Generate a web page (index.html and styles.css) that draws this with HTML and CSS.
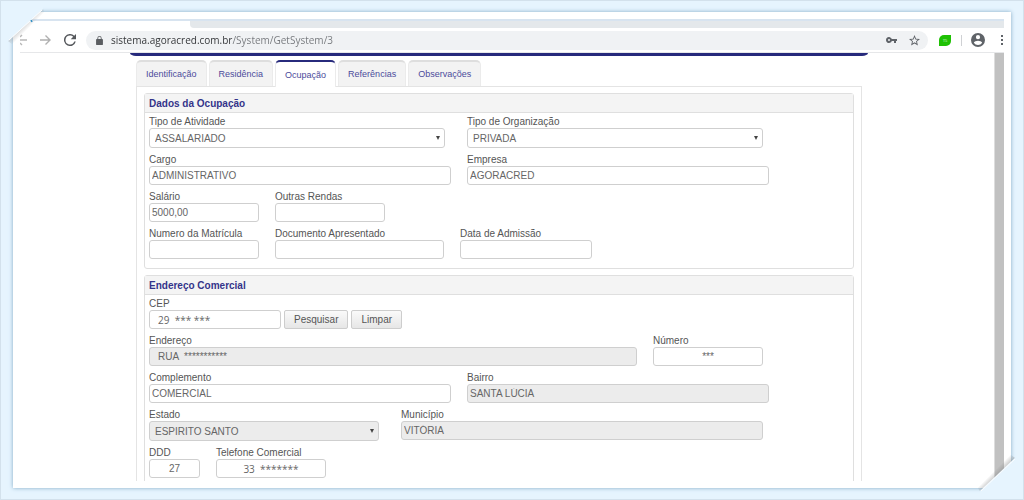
FILE: index.html
```html
<!DOCTYPE html>
<html lang="pt-br">
<head>
    <meta charset="UTF-8">
    <meta name="viewport" content="width=device-width, initial-scale=1.0">
    <title>Sistema Agoracred</title>
    <link rel="stylesheet" href="styles.css">
</head>
<body>
    <div class="frame">
        <div class="browser">
            <div class="tab-strip"><div class="open-tab"></div><div class="strip-rest"></div></div>
            <header class="toolbar">
                <button type="button" class="icon-btn back" aria-label="Voltar">
                    <svg width="7" height="12" viewBox="0 0 7 12" fill="none" stroke="#b8b8b8" stroke-width="1.4"><path d="M0 6h7M0 3l2-2M0 9l2 2"/></svg>
                </button>
                <button type="button" class="icon-btn forward" aria-label="Avançar">
                    <svg width="11" height="12" viewBox="0 0 11 12" fill="none" stroke="#b0b0b0" stroke-width="1.4"><path d="M0 6h10M5.5 1.500L10 6l-4.500 4.500"/></svg>
                </button>
                <button type="button" class="icon-btn reload" aria-label="Recarregar">
                    <svg width="12" height="12" viewBox="4 4 16 16" fill="#55585c"><path d="M17.650 6.350A8 8 0 1 0 19.730 14h-2.080A6 6 0 1 1 12 6c1.660 0 3.140.69 4.220 1.780L13 11h7V4z"/></svg>
                </button>
                <div class="address">
                    <svg width="7" height="9" viewBox="4 1 16 21" fill="#5a5d61"><path d="M18 8h-1V6A5 5 0 0 0 7 6v2H6a2 2 0 0 0-2 2v10a2 2 0 0 0 2 2h12a2 2 0 0 0 2-2V10a2 2 0 0 0-2-2zM9 8V6a3 3 0 0 1 6 0v2z"/></svg>
                    <input type="text" class="url" aria-label="Endereço do site" value="sistema.agoracred.com.br/System/GetSystem/3">
                    <svg width="11" height="6" viewBox="1 6 22 12" fill="#5f6368"><path d="M12.650 10A6 6 0 1 0 12.650 14H17v4h4v-4h2v-4zM7 14a2 2 0 1 1 0-4 2 2 0 0 1 0 4z"/></svg>
                    <svg width="11" height="11" viewBox="2 2 20 20" fill="#5f6368"><path d="M22 9.240l-7.190-.62L12 2 9.190 8.630 2 9.240l5.460 4.730L5.820 21 12 17.270 18.180 21l-1.630-7.030zM12 15.400l-3.760 2.270 1-4.280-3.320-2.880 4.380-.38L12 6.100l1.710 4.040 4.380.38-3.320 2.880 1 4.280z"/></svg>
                </div>
                <div class="extension">T5</div>
                <div class="divider"></div>
                <svg class="avatar" width="14" height="14" viewBox="2 2 20 20" fill="#5f6368"><path d="M12 2a10 10 0 1 0 0 20 10 10 0 0 0 0-20zm0 3a3 3 0 1 1 0 6 3 3 0 0 1 0-6zm0 14.200A7.200 7.200 0 0 1 6 16c.03-2 4-3.100 6-3.100s5.970 1.100 6 3.100a7.200 7.200 0 0 1-6 3.200z"/></svg>
                <button type="button" class="icon-btn" aria-label="Menu">
                    <svg width="3" height="10" viewBox="0 0 3 10" fill="#5f6368"><path d="M0 0h2v2H0zM0 4h2v2H0zM0 8h2v2H0z"/></svg>
                </button>
            </header>

            <div class="viewport">
                <main class="page">
                    <div class="top-bar"></div>
                    <div class="content">
                        <nav class="tabs" role="tablist">
                            <button type="button" role="tab" class="tab">Identificação</button>
                            <button type="button" role="tab" class="tab">Residência</button>
                            <button type="button" role="tab" class="tab active" aria-selected="true">Ocupação</button>
                            <button type="button" role="tab" class="tab">Referências</button>
                            <button type="button" role="tab" class="tab">Observações</button>
                        </nav>

                        <form class="panel">
                            <section class="box">
                                <h2>Dados da Ocupação</h2>
                                <div class="rows">
                                    <div class="row">
                                        <div class="field">
                                            <label for="atividade">Tipo de Atividade</label>
                                            <div class="select w-large"><select id="atividade"><option>ASSALARIADO</option></select></div>
                                        </div>
                                        <div class="field">
                                            <label for="organizacao">Tipo de Organização</label>
                                            <div class="select w-large"><select id="organizacao"><option>PRIVADA</option></select></div>
                                        </div>
                                    </div>
                                    <div class="row">
                                        <div class="field">
                                            <label for="cargo">Cargo</label>
                                            <input type="text" id="cargo" class="w-text" value="ADMINISTRATIVO">
                                        </div>
                                        <div class="field">
                                            <label for="empresa">Empresa</label>
                                            <input type="text" id="empresa" class="w-text" value="AGORACRED">
                                        </div>
                                    </div>
                                    <div class="row">
                                        <div class="field">
                                            <label for="salario">Salário</label>
                                            <input type="text" id="salario" class="w-small" value="5000,00">
                                        </div>
                                        <div class="field">
                                            <label for="rendas">Outras Rendas</label>
                                            <input type="text" id="rendas" class="w-small">
                                        </div>
                                    </div>
                                    <div class="row">
                                        <div class="field">
                                            <label for="matricula">Numero da Matrícula</label>
                                            <input type="text" id="matricula" class="w-small">
                                        </div>
                                        <div class="field">
                                            <label for="documento">Documento Apresentado</label>
                                            <input type="text" id="documento" class="w-doc">
                                        </div>
                                        <div class="field">
                                            <label for="admissao">Data de Admissão</label>
                                            <input type="text" id="admissao" class="w-date">
                                        </div>
                                    </div>
                                </div>
                            </section>

                            <section class="box">
                                <h2>Endereço Comercial</h2>
                                <div class="rows">
                                    <div class="row with-buttons">
                                        <div class="field">
                                            <label for="cep">CEP</label>
                                            <input type="text" id="cep" class="w-date indent masked" value="29  *** ***">
                                        </div>
                                        <button type="button" class="btn">Pesquisar</button>
                                        <button type="button" class="btn">Limpar</button>
                                    </div>
                                    <div class="row">
                                        <div class="field">
                                            <label for="endereco">Endereço</label>
                                            <input type="text" id="endereco" class="w-street indent" value="RUA  ***********" readonly>
                                        </div>
                                        <div class="field">
                                            <label for="numero">Número</label>
                                            <input type="text" id="numero" class="w-small center" value="***">
                                        </div>
                                    </div>
                                    <div class="row">
                                        <div class="field">
                                            <label for="complemento">Complemento</label>
                                            <input type="text" id="complemento" class="w-text" value="COMERCIAL">
                                        </div>
                                        <div class="field">
                                            <label for="bairro">Bairro</label>
                                            <input type="text" id="bairro" class="w-text" value="SANTA LÚCIA" readonly>
                                        </div>
                                    </div>
                                    <div class="row">
                                        <div class="field">
                                            <label for="estado">Estado</label>
                                            <div class="select w-state"><select id="estado" disabled><option>ESPIRITO SANTO</option></select></div>
                                        </div>
                                        <div class="field">
                                            <label for="municipio">Município</label>
                                            <input type="text" id="municipio" class="w-city" value="VITÓRIA" readonly>
                                        </div>
                                    </div>
                                    <div class="row">
                                        <div class="field">
                                            <label for="ddd">DDD</label>
                                            <input type="text" id="ddd" class="w-ddd center" value="27">
                                        </div>
                                        <div class="field">
                                            <label for="telefone">Telefone Comercial</label>
                                            <input type="text" id="telefone" class="w-small center masked" value="33  *******">
                                        </div>
                                    </div>
                                </div>
                            </section>
                        </form>
                    </div>
                </main>
                <div class="scrollbar"></div>
            </div>
        </div>

        <!-- Cantos dobrados -->
        <svg class="corner corner-top" width="48" height="48" viewBox="0 0 48 48">
            <defs>
                <linearGradient id="fold" gradientUnits="userSpaceOnUse" x1="25" y1="24" x2="29" y2="28">
                    <stop offset="0" stop-color="#999" stop-opacity="0.4"/>
                    <stop offset="1" stop-color="#999" stop-opacity="0"/>
                </linearGradient>
            </defs>
            <path d="M43 9L46 14 13 45 8 41z" fill="url(#fold)"/>
            <path d="M4 4h40L43 9 8 41 4 42z" fill="#e6f4fe"/>
            <path d="M42 10L9 40" stroke="#fbfdff"/>
            <path d="M31 20l1 2" stroke="#2f8fc4" stroke-width="1.500"/>
        </svg>
        <svg class="corner corner-bottom" width="48" height="48" viewBox="0 0 48 48">
            <defs>
                <linearGradient id="fold-end" gradientUnits="userSpaceOnUse" x1="22" y1="23" x2="18" y2="19">
                    <stop offset="0" stop-color="#777" stop-opacity="0.4"/>
                    <stop offset="1" stop-color="#777" stop-opacity="0"/>
                </linearGradient>
            </defs>
            <path d="M4 39L0 34 34 2 39 6z" fill="url(#fold-end)"/>
            <path d="M44 44H4V39L39 6h5z" fill="#e6f4fe"/>
            <path d="M5 39L39 7" stroke="#fbfdff"/>
        </svg>
    </div>
</body>
</html>
```
FILE: styles.css
```css
/* General */
* {
    box-sizing: border-box;
}

body {
    margin: 0;
    font-family: "Liberation Sans", Arial, sans-serif;
    font-size: 10px;
    color: #555;
}

button,
input,
select {
    font-family: inherit;
    font-size: inherit;
    color: inherit;
    margin: 0;
}

/* Marco */
.frame {
    position: relative;
    height: 100vh;
    padding: 11px 12px;
    background: #e6f4fe;
    border: 1px solid #d3e1ec;
}

.browser {
    display: flex;
    flex-direction: column;
    height: 100%;
    padding: 7px;
    background: #fff;
    box-shadow: 0 0 4px #7fa9c4;
}

.corner {
    position: absolute;
}

.corner-top {
    top: -1px;
    left: -1px;
}

.corner-bottom {
    right: -1px;
    bottom: -1px;
}

/* Barra do navegador */
.tab-strip {
    display: flex;
    flex: none;
    height: 9px;
    border-top: 2px solid #d8e4f0;
    background: #fff;
}

.open-tab {
    width: 170px;
}

.strip-rest {
    flex: 1;
    background: #e4e8eb;
    border-radius: 0 0 0 4px;
}

.toolbar {
    display: flex;
    flex: none;
    align-items: center;
    height: 25px;
    border-bottom: 1px solid #e6e7e9;
}

.icon-btn {
    display: flex;
    padding: 0;
    border: none;
    background: none;
}

.back,
.forward {
    margin-right: 13px;
}

.reload {
    margin-right: 10px;
}

.address {
    display: flex;
    flex: 1;
    align-items: center;
    height: 19px;
    padding: 0 8px 0 10px;
    background: #f0f2f4;
    border-radius: 10px;
}

.url {
    flex: 1;
    margin: 0 12px 0 8px;
    padding: 0;
    border: none;
    font-family: "Open Sans", "Noto Sans", sans-serif;
    /* dominio escuro, caminho mais claro */
    background: linear-gradient(to right, #2f3134 121px, #74777b 121px);
    -webkit-background-clip: text;
    background-clip: text;
    color: transparent;
}

.address svg:last-child {
    margin-left: 12px;
}

.extension {
    width: 12px;
    height: 11px;
    margin: 0 10px 0 11px;
    border-radius: 5px 0 5px 0;
    background: #1fc104;
    color: #c9f5c2;
    font-size: 4px;
    line-height: 11px;
    text-align: center;
}

.divider {
    width: 1px;
    height: 11px;
    margin-right: 9px;
    background: #cfd1d4;
}

.avatar {
    margin-right: 16px;
}

/* Pagina */
.viewport {
    display: flex;
    flex: 1;
    min-height: 0;
}

.page {
    flex: 1;
    padding: 0 126px 0 110px;
    overflow: hidden;
}

.scrollbar {
    width: 10px;
    background: #c1c1c1;
    border-left: 1px solid #ddd;
}

.top-bar {
    height: 3px;
    background: #272a7c;
    border-radius: 0 0 6px 6px / 0 0 3px 3px;
}

.content {
    padding: 4px 6px 0;
}

/* Abas */
.tabs {
    display: flex;
    gap: 2px;
}

.tab {
    height: 26px;
    padding: 0 9px;
    border: 1px solid #ebebeb;
    border-top: 2px solid #dedede;
    border-bottom: none;
    border-radius: 5px 5px 0 0;
    background: #f3f3f3;
    color: #4b4b9b;
    font-size: 9px;
}

.tab.active {
    height: 27px;
    margin-bottom: -1px;
    border-top-color: #272a7c;
    background: #fff;
    z-index: 1;
}

.panel {
    padding: 6px 7px;
    border: 1px solid #e4e4e4;
    border-bottom: none;
}

/* Caixas do formulario */
.box {
    margin-bottom: 6px;
    border: 1px solid #dfdfdf;
    border-radius: 3px;
}

.box h2 {
    height: 19px;
    margin: 0;
    padding: 0 4px;
    border-bottom: 1px solid #dfdfdf;
    background: #f4f4f4;
    color: #34348a;
    font-size: 10px;
    line-height: 19px;
}

.rows {
    display: flex;
    flex-direction: column;
    gap: 6px;
    padding: 3px 4px 9px;
}

.row {
    display: flex;
    gap: 16px;
}

.with-buttons {
    align-items: flex-end;
    gap: 3px;
}

.field label {
    display: block;
    height: 12px;
    line-height: 12px;
}

.field input,
.field select {
    display: block;
    height: 19px;
    padding: 0 2px;
    border: 1px solid #cfcfcf;
    border-radius: 3px;
    background: #fff;
    color: #666;
    line-height: 17px;
}

.field select {
    width: 100%;
    height: 20px;
    padding: 0 5px;
    appearance: none;
    opacity: 1;
}

.field input:read-only,
.field select:disabled {
    background: #ececec;
}

.select {
    position: relative;
    margin-right: 6px;
}

.select::after {
    content: "";
    position: absolute;
    top: 8px;
    right: 5px;
    border: 2px solid transparent;
    border-top: 4px solid #444;
    border-bottom: none;
}

.field input.indent {
    padding-left: 8px;
}

.field input.center {
    text-align: center;
}

.field input.masked {
    font-family: "Open Sans", "Noto Sans", sans-serif;
}

.btn {
    height: 19px;
    padding: 0 9px;
    border: 1px solid #cdcdcd;
    border-radius: 2px;
    background: linear-gradient(#fafafa, #e6e6e6);
}

/* Larguras dos campos */
.w-large { width: 296px; }
.w-text { width: 302px; }
.w-small { width: 110px; }
.w-doc { width: 169px; }
.w-date { width: 132px; }
.w-street { width: 488px; }
.w-state { width: 230px; }
.w-city { width: 362px; }
.w-ddd { width: 51px; }
```
